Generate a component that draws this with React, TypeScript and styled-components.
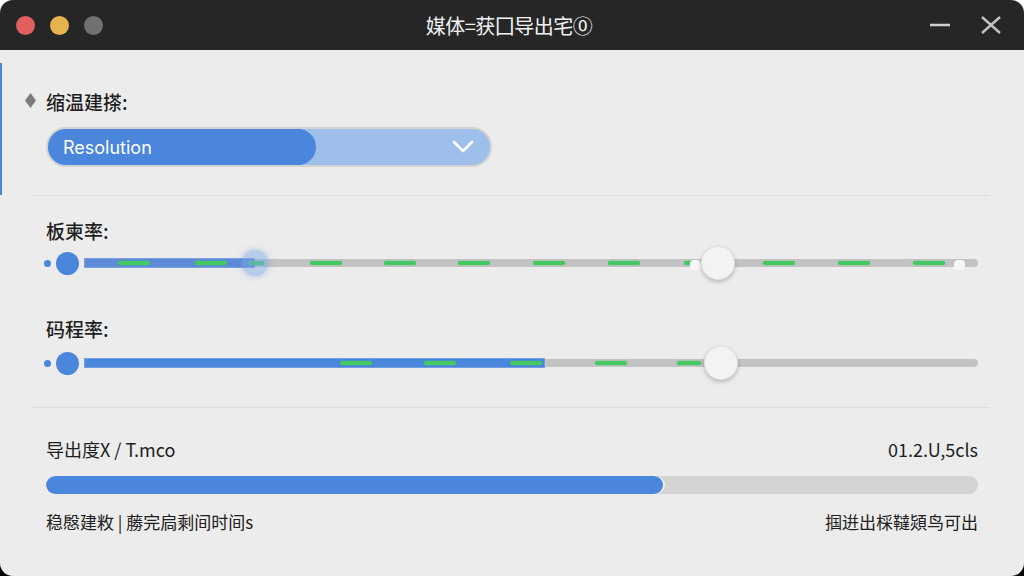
import styled, { createGlobalStyle } from "styled-components";

const GlobalStyle = createGlobalStyle`
  html, body {
    margin: 0;
    padding: 0;
  }
  body {
    background: linear-gradient(#ffffff 50%, #000000 50%);
    font-family: Inter, "Noto Sans CJK SC", "Noto Sans", sans-serif;
  }
`;

type Dash = { left: number; width?: number };

type TSlider = {
  fill: number;
  fillColor: string;
  thumb: number;
  dashes: Dash[];
  halo?: number;
  nubs?: number[];
  offset?: number;
};

const slider1: TSlider = {
  fill: 171,
  fillColor: "#5d8bd7",
  thumb: 634,
  halo: 171,
  nubs: [606, 870],
  dashes: [
    { left: 34 },
    { left: 111 },
    { left: 164, width: 16 },
    { left: 226 },
    { left: 300 },
    { left: 374 },
    { left: 449 },
    { left: 524 },
    { left: 600, width: 18 },
    { left: 679 },
    { left: 754 },
    { left: 829 },
  ],
};

const slider2: TSlider = {
  fill: 461,
  fillColor: "#4a86dc",
  thumb: 637,
  offset: 2,
  dashes: [
    { left: 256 },
    { left: 340 },
    { left: 426 },
    { left: 511 },
    { left: 593, width: 24 },
  ],
};

const Slider = ({ fill, fillColor, thumb, dashes, halo, nubs, offset }: TSlider) => (
  <SliderRow $offset={offset ?? 0}>
    <TinyDot />
    <StartKnob />
    <Track>
      <Fill $color={fillColor} style={{ width: fill }} />
      {dashes.map((d) => (
        <GreenDash key={d.left} style={{ left: d.left, width: d.width ?? 32 }} />
      ))}
      {halo !== undefined && <Halo style={{ left: halo }} />}
      {nubs?.map((n) => (
        <Nub key={n} style={{ left: n }} />
      ))}
      <Thumb style={{ left: thumb }} />
    </Track>
  </SliderRow>
);

const App = () => {
  return (
    <>
      <GlobalStyle />
      <Window>
        <TitleBar>
          <Lights>
            <Light $color="#e25f5f" />
            <Light $color="#e6b34f" />
            <Light $color="#717171" />
          </Lights>
          <Title>媒体=获囗导出宅⓪</Title>
          <WindowButtons>
            <svg width="20" height="20" viewBox="0 0 20 20">
              <line x1="0" y1="10" x2="20" y2="10" stroke="#cfcfcf" strokeWidth="2.4" />
            </svg>
            <svg width="22" height="18" viewBox="0 0 22 18">
              <path d="M2 1 L20 17 M20 1 L2 17" stroke="#c2c2c2" strokeWidth="2.4" fill="none" />
            </svg>
          </WindowButtons>
        </TitleBar>

        <Content>
          <SelectSection>
            <Label>
              <Diamond />
              缩温建搽:
            </Label>
            <Select>
              <SelectValue>Resolution</SelectValue>
              <svg width="22" height="14" viewBox="0 0 22 14">
                <path d="M2 2 L11 11 L20 2" stroke="#ffffff" strokeWidth="2.6" fill="none" strokeLinecap="round" strokeLinejoin="round" />
              </svg>
            </Select>
          </SelectSection>

          <Divider />

          <SliderSection>
            <Label>板柬率:</Label>
            <Slider {...slider1} />
            <Label $top={32}>码程率:</Label>
            <Slider {...slider2} />
          </SliderSection>

          <Divider />

          <ProgressSection>
            <InfoRow>
              <span>导出度X / T.mco</span>
              <span>01.2.U,5cls</span>
            </InfoRow>
            <ProgressTrack>
              <ProgressFill style={{ width: `${(617 / 932) * 100}%` }} />
            </ProgressTrack>
            <FootRow>
              <span>稳慇建敉 | 蕂完扃剩间时间s</span>
              <span>掴逬出棌韃熲鸟可出</span>
            </FootRow>
          </ProgressSection>
        </Content>
      </Window>
    </>
  );
};

export default App;

const Window = styled.div`
  width: 1024px;
  height: 576px;
  border-radius: 13px;
  overflow: hidden;
  background: #ececec;
  display: flex;
  flex-direction: column;
`;

const TitleBar = styled.header`
  height: 50px;
  flex-shrink: 0;
  background: #262626;
  display: grid;
  grid-template-columns: 1fr auto 1fr;
  align-items: center;
  padding: 0 22px 0 16px;
`;

const Lights = styled.div`
  display: flex;
  gap: 15px;
  align-items: center;
`;

const Light = styled.span<{ $color: string }>`
  width: 19px;
  height: 19px;
  border-radius: 50%;
  background: ${(p) => p.$color};
`;

const Title = styled.h1`
  margin: 0;
  color: #f2f2f2;
  font-size: 20px;
  font-weight: 400;
  font-family: "Noto Sans CJK SC", "DejaVu Sans", sans-serif;
  letter-spacing: -0.5px;
`;

const WindowButtons = styled.div`
  display: flex;
  justify-content: flex-end;
  align-items: center;
  gap: 30px;
`;

const Content = styled.main`
  flex: 1;
  display: flex;
  flex-direction: column;
  padding-top: 13px;
`;

const SelectSection = styled.section`
  border-left: 2px solid #4a86dc;
  padding: 26px 46px 28px 44px;
  display: flex;
  flex-direction: column;
  gap: 14px;
`;

const Label = styled.div<{ $top?: number }>`
  display: flex;
  align-items: center;
  height: 24px;
  margin-top: ${(p) => p.$top ?? 0}px;
  font-family: "Noto Sans CJK SC", sans-serif;
  font-size: 19px;
  font-weight: 500;
  color: #1f1f1f;
  position: relative;
`;

const Diamond = styled.span`
  position: absolute;
  left: -21px;
  top: 4px;
  width: 11px;
  height: 15px;
  background: #7c7c7c;
  clip-path: polygon(50% 0, 100% 50%, 50% 100%, 0 50%);
`;

const Select = styled.div`
  width: 446px;
  height: 40px;
  box-sizing: border-box;
  border: 2px solid #d2d2d2;
  border-radius: 20px;
  background: #9ebfea;
  display: flex;
  align-items: center;
  justify-content: space-between;
  padding-right: 16px;
  overflow: hidden;
`;

const SelectValue = styled.div`
  width: 268px;
  height: 100%;
  background: #4a86dc;
  border-radius: 0 20px 20px 0;
  display: flex;
  align-items: center;
  padding-left: 15px;
  box-sizing: border-box;
  color: #ffffff;
  font-size: 18px;
  font-family: Inter, "Noto Sans", sans-serif;
`;

const Divider = styled.hr`
  margin: 0 34px 0 32px;
  border: none;
  border-top: 1px solid #dcdcdc;
`;

const SliderSection = styled.section`
  padding: 22px 46px 31px;
  display: flex;
  flex-direction: column;
  gap: 8px;
`;

const SliderRow = styled.div<{ $offset: number }>`
  height: 26px;
  margin-top: ${(p) => p.$offset}px;
  display: flex;
  align-items: center;
`;

const TinyDot = styled.span`
  width: 7px;
  height: 7px;
  border-radius: 50%;
  background: #4a86dc;
  margin-left: -2px;
`;

const StartKnob = styled.span`
  width: 23px;
  height: 23px;
  border-radius: 50%;
  background: #4a86dc;
  margin-left: 5px;
`;

const Track = styled.div`
  position: relative;
  flex: 1;
  height: 8px;
  margin-left: 5px;
  border-radius: 4px;
  background: #c3c3c3;
`;

const Fill = styled.div<{ $color: string }>`
  position: absolute;
  left: 0;
  top: -1px;
  height: 10px;
  background: ${(p) => p.$color};
  box-shadow: inset 0 0 0 1px rgba(140, 175, 230, 0.6);
`;

const GreenDash = styled.span`
  position: absolute;
  top: 2px;
  height: 4px;
  border-radius: 2px;
  background: #44c862;
  box-shadow: 0 0 2px rgba(70, 200, 95, 0.7);
`;

const Halo = styled.span`
  position: absolute;
  top: 50%;
  width: 26px;
  height: 26px;
  margin-left: -13px;
  transform: translateY(-50%);
  border-radius: 50%;
  background: rgba(120, 165, 235, 0.45);
  box-shadow: 0 0 6px rgba(100, 150, 230, 0.5);
`;

const Nub = styled.span`
  position: absolute;
  top: 1px;
  width: 11px;
  height: 10px;
  border-radius: 4px;
  background: #f6f6f6;
`;

const Thumb = styled.span`
  position: absolute;
  top: 50%;
  width: 34px;
  height: 34px;
  margin-left: -17px;
  transform: translateY(-50%);
  border-radius: 50%;
  background: #f3f3f3;
  border: 1px solid #e2e2e2;
  box-sizing: border-box;
  box-shadow: 0 2px 4px rgba(0, 0, 0, 0.22);
`;

const ProgressSection = styled.section`
  padding: 29px 46px 0;
  display: flex;
  flex-direction: column;
  gap: 15px;
`;

const InfoRow = styled.div`
  height: 24px;
  display: flex;
  justify-content: space-between;
  align-items: center;
  font-family: "Noto Sans CJK SC", sans-serif;
  font-size: 18px;
  color: #1f1f1f;
`;

const ProgressTrack = styled.div`
  height: 18px;
  border-radius: 9px;
  background: #d3d3d3;
  overflow: hidden;
`;

const ProgressFill = styled.div`
  height: 100%;
  border-radius: 9px;
  background: #4a86dc;
  box-shadow: 2px 0 0 rgba(255, 255, 255, 0.6);
`;

const FootRow = styled.div`
  height: 24px;
  display: flex;
  justify-content: space-between;
  align-items: center;
  font-family: "Noto Sans CJK SC", sans-serif;
  font-size: 17px;
  color: #202020;
`;
